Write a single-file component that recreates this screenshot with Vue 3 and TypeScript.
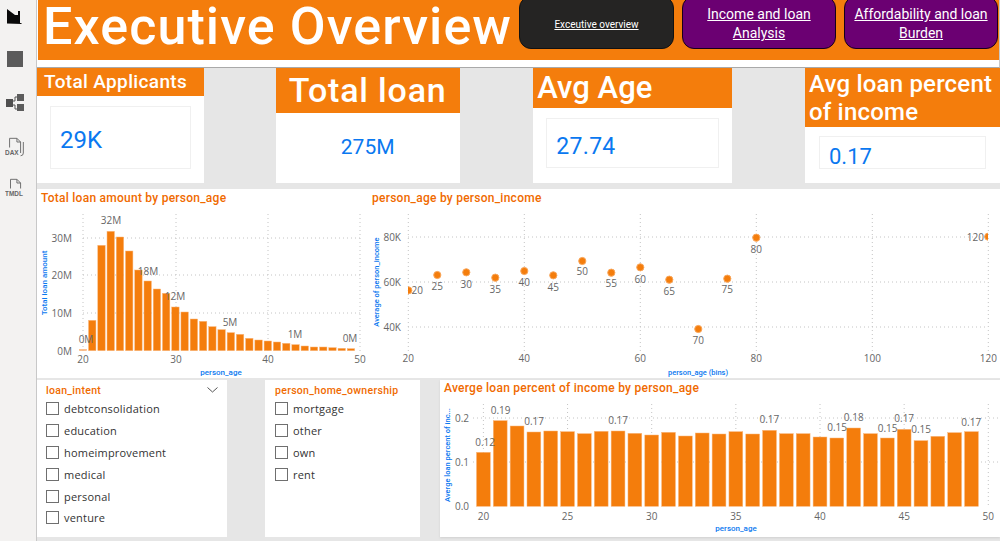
<script setup lang="ts">
const f1 = [493,406,181,139,156,198,255,288,312,325,366,381,402,409,425,434,443,448,460,465,468,471,475,479,483,486,486,488,490,491]
const bars1 = f1.map((z, i) => ({ x: 83 + i * 9.24 - 3.7, y: 185 + z / 3, h: (497 - z) / 3 }))
const grid1V = [83, 176, 268, 360]
const ticks1Y = [{ t: '0M', y: 351 }, { t: '10M', y: 313 }, { t: '20M', y: 275 }, { t: '30M', y: 238 }]
const labels1 = [
  { t: '0M', x: 86, y: 343 }, { t: '32M', x: 111, y: 224 }, { t: '18M', x: 148, y: 275 },
  { t: '12M', x: 175, y: 300 }, { t: '5M', x: 230, y: 326 }, { t: '1M', x: 295, y: 338 }, { t: '0M', x: 350, y: 342 }
]
const px2 = (a: number) => 408.3 + (a - 20) * 5.8
const pts2 = [
  [20,316,290],[25,270,286],[30,262,284],[35,278,289],[40,258,282],[45,271,287],[50,228,271],
  [55,263,283],[60,247,279],[65,284,291],[70,432,340],[75,281,289],[80,158,249],[120,155,237]
].map(([a, z, ly]) => ({
  a, x: px2(a), y: 185 + z / 3, ly: ly + 4,
  lx: a === 20 ? px2(a) + 9 : a === 120 ? px2(a) - 13 : px2(a)
}))
const ticks2X = [20, 40, 60, 80, 100, 120]
const f3 = [232,137,153,171,168,170,176,169,168,175,180,172,183,174,177,170,177,166,176,176,186,189,159,176,189,163,197,184,173,170]
const bars3 = f3.map((z, i) => ({ x: 483.4 + i * 16.83 - 6.9, y: 375 + z / 3, h: (394 - z) / 3 }))
const labels3 = [
  ['0.12',139,200],['0.19',182,105],['0.17',275,138],['0.17',508,136],['0.17',928,133],['0.15',1116,157],
  ['0.18',1162,127],['0.15',1256,160],['0.17',1302,130],['0.15',1349,163],['0.17',1488,140]
].map(([t, x, y]) => ({ t: t as string, x: 435 + (x as number) / 2.775, y: 375 + (y as number) / 3 + 4 }))
const ticks3X = [20, 25, 30, 35, 40, 45, 50]
const intents = ['debtconsolidation', 'education', 'homeimprovement', 'medical', 'personal', 'venture']
const homes = ['mortgage', 'other', 'own', 'rent']
const kpis = [
  { cls: 'k1', title: 'Total Applicants', value: '29K' },
  { cls: 'k2', title: 'Total loan', value: '275M' },
  { cls: 'k3', title: 'Avg Age', value: '27.74' },
  { cls: 'k4', title: 'Avg loan percent of income', value: '0.17' }
]
</script>

<template>
  <div class="app">
    <aside class="rail">
      <svg class="ic i1" viewBox="0 0 15 15"><path d="M0 0 L8 6 L11 6 L11 2 L13 2 L13 14 L14.5 14 L14.5 15 L0 14.5 Z" fill="#0a0a0a" /></svg>
      <svg class="ic i2" viewBox="0 0 16 16"><rect width="16" height="16" fill="#5b5b5b" /></svg>
      <svg class="ic i3" viewBox="0 0 20 20"><rect x="1" y="6" width="7" height="8" fill="#4f4f4f" /><rect x="12" y="1" width="7" height="7" fill="#5c5c5c" /><rect x="12" y="11" width="7" height="7" fill="#5c5c5c" /><path d="M8 8h2V4h2M8 12h2v4h2" fill="none" stroke="#555" /></svg>
      <svg class="ic i4" viewBox="0 0 24 22">
        <path d="M5 11V1h8l4 4v12" fill="none" stroke="#666" /><path d="M13 1v4h4M20 5v12q0 3-3 3" fill="none" stroke="#666" />
        <text x="0" y="19" class="ict">DAX</text>
      </svg>
      <svg class="ic i5" viewBox="0 0 24 22">
        <path d="M6 11V1h7l4 4v6" fill="none" stroke="#666" /><path d="M13 1v4h4" fill="none" stroke="#666" />
        <text x="0" y="19" class="ict">TMDL</text>
      </svg>
    </aside>

    <main class="page">
      <header class="head">
        <div class="band">
          <h1 class="title">Executive Overview</h1>
          <nav class="nav">
            <a class="btn dark">Exceutive overview</a>
            <a class="btn">Income and loan Analysis</a>
            <a class="btn">Affordability and loan Burden</a>
          </nav>
        </div>
      </header>

      <section class="kpis">
        <div v-for="k in kpis" :key="k.cls" class="kpi" :class="k.cls">
          <div class="kpi-head">{{ k.title }}</div>
          <div class="kpi-body"><div class="kpi-inner">{{ k.value }}</div></div>
        </div>
      </section>

      <section class="charts">
        <div class="panel p1">
          <div class="ctitle">Total loan amount by person_age</div>
          <svg class="plot" width="331" height="189" viewBox="37 189 331 189">
            <line v-for="x in grid1V" :key="x" :x1="x" :x2="x" y1="214" y2="351" class="grid" />
            <line v-for="t in ticks1Y.slice(1)" :key="t.t" x1="83" x2="362" :y1="t.y" :y2="t.y" class="grid" />
            <rect v-for="(b, i) in bars1" :key="i" :x="b.x" :y="b.y" width="7.4" :height="b.h" :class="i === 0 ? 'bar faint' : 'bar'" />
            <text v-for="t in ticks1Y" :key="'y' + t.t" x="72" :y="t.y + 4" class="tick end">{{ t.t }}</text>
            <text v-for="(x, i) in grid1V" :key="'x' + x" :x="x" y="363" class="tick mid">{{ 20 + i * 10 }}</text>
            <text v-for="(l, i) in labels1" :key="'l' + i" :x="l.x" :y="l.y" class="tick mid">{{ l.t }}</text>
            <text x="221" y="375" class="axis mid">person_age</text>
            <text transform="translate(47 283) rotate(-90)" class="axis mid">Total loan amount</text>
          </svg>
        </div>
        <div class="panel p2">
          <div class="ctitle">person_age by person_income</div>
          <svg class="plot" width="632" height="189" viewBox="368 189 632 189">
            <defs><clipPath id="plot2"><rect x="408" y="200" width="580" height="160" /></clipPath></defs>
            <line v-for="a in ticks2X" :key="a" :x1="px2(a)" :x2="px2(a)" y1="214" y2="353" class="grid" />
            <line v-for="y in [237, 282, 327]" :key="y" x1="408" x2="988" :y1="y" :y2="y" class="grid" />
            <text v-for="(t, i) in ['80K', '60K', '40K']" :key="t" x="401" :y="241 + i * 45" class="tick end">{{ t }}</text>
            <text v-for="a in ticks2X" :key="'t' + a" :x="px2(a)" y="362" class="tick mid">{{ a }}</text>
            <g clip-path="url(#plot2)">
              <circle v-for="p in pts2" :key="p.a" :cx="p.x" :cy="p.y" r="3.6" class="dot" />
            </g>
            <text v-for="p in pts2" :key="'l' + p.a" :x="p.lx" :y="p.ly" class="tick mid sm">{{ p.a }}</text>
            <text x="698" y="375" class="axis mid sx">person_age (bins)</text>
            <text transform="translate(379 282) rotate(-90)" class="axis mid sx">Average of person_income</text>
          </svg>
        </div>
      </section>

      <section class="bottom">
        <div class="slicer s1">
          <div class="stitle">loan_intent
            <svg class="chev" width="11" height="6" viewBox="0 0 11 6"><path d="M.5.5 5.5 5 10.5.5" fill="none" stroke="#555" /></svg>
          </div>
          <label v-for="o in intents" :key="o" class="opt"><span class="box"></span>{{ o }}</label>
        </div>
        <div class="slicer s2">
          <div class="stitle">person_home_ownership</div>
          <label v-for="o in homes" :key="o" class="opt"><span class="box"></span>{{ o }}</label>
        </div>
        <div class="panel p3">
          <div class="ctitle big">Averge loan percent of income by person_age</div>
          <svg class="plot" width="560" height="157" viewBox="440 380 560 157">
            <line v-for="a in ticks3X" :key="a" :x1="483.4 + (a - 20) * 16.83" :x2="483.4 + (a - 20) * 16.83" y1="404" y2="506" class="grid" />
            <line v-for="y in [418, 462]" :key="y" x1="473" x2="998" :y1="y" :y2="y" class="grid" />
            <rect v-for="(b, i) in bars3" :key="i" :x="b.x" :y="b.y" width="13.8" :height="b.h" class="bar" />
            <text v-for="(t, i) in ['0.2', '0.1', '0.0']" :key="t" x="469" :y="422 + i * 44" class="tick end">{{ t }}</text>
            <text v-for="a in ticks3X" :key="'t' + a" :x="483.4 + (a - 20) * 16.83" y="520" class="tick mid">{{ a }}</text>
            <text v-for="(l, i) in labels3" :key="i" :x="l.x" :y="l.y" class="tick mid sm">{{ l.t }}</text>
            <text x="736" y="531" class="axis mid">person_age</text>
            <text transform="translate(450 455) rotate(-90)" class="axis mid sx">Averge loan percent of inc...</text>
          </svg>
        </div>
      </section>
    </main>
  </div>
</template>

<style>
html, body { margin: 0; background: #e6e6e6; }
</style>

<style scoped>
.app {
  display: flex;
  width: 1000px;
  height: 541px;
  overflow: hidden;
  font-family: Roboto, "Liberation Sans", sans-serif;
  background: #e6e6e6;
}
.rail {
  box-sizing: border-box;
  width: 37px;
  flex: none;
  background: #f3f2f1;
  border-right: 1px solid #c8c8c8;
  display: flex;
  flex-direction: column;
  align-items: center;
  padding: 9px 7px 0 0;
}
.ic { display: block; }
.i1 { width: 15px; height: 15px; }
.i2 { width: 16px; height: 16px; margin-top: 27px; }
.i3 { width: 20px; height: 20px; margin-top: 26px; }
.i4 { width: 22px; height: 21px; margin-top: 24px; margin-left: 2px; }
.i5 { width: 22px; height: 21px; margin-top: 20px; margin-left: 2px; }
.ict { font: 700 7px "Liberation Sans", sans-serif; fill: #666; }
.page { flex: 1; min-width: 0; display: flex; flex-direction: column; }

.head {
  height: 68px;
  flex: none;
  box-sizing: border-box;
  background: #fff;
  padding: 0 0 6px 1px;
  border-bottom: 1px solid #a9a9a9;
  border-right: 1px solid #c8c8c8;
}
.band {
  height: 60px;
  background: #f47d0c;
  display: flex;
  align-items: flex-start;
}
.title {
  margin: 0 0 0 5px;
  width: 475px;
  flex: none;
  font-size: 52px;
  line-height: 54px;
  font-weight: 500;
  letter-spacing: 1.1px;
  color: #fff;
  white-space: nowrap;
}
.nav { display: flex; gap: 8px; margin-left: 1px; margin-top: -4px; }
.btn {
  box-sizing: border-box;
  width: 154px;
  height: 53px;
  padding: 3px 8px 0;
  display: flex;
  align-items: center;
  justify-content: center;
  text-align: center;
  background: #6b0072;
  border: 1px solid #16001a;
  border-radius: 12px;
  color: #fff;
  font-size: 14px;
  line-height: 19px;
  text-decoration: underline;
}
.btn.dark { width: 155px; background: #252423; font-size: 10px; border-color: #111; }

.kpis {
  height: 114px;
  flex: none;
  display: grid;
  grid-template-columns: 167px 184px 199px 195px;
  justify-content: space-between;
  box-sizing: border-box;
}
.kpi { background: #fff; display: flex; flex-direction: column; min-width: 0; }
.kpi-head {
  background: #f47d0c;
  color: #fff;
  font-weight: 500;
  box-sizing: border-box;
  white-space: nowrap;
}
.kpi-body { flex: 1; display: flex; }
.kpi-inner {
  color: #0a78f0;
  font-weight: 400;
  box-sizing: border-box;
  border: 1px solid #f0f0f0;
  display: flex;
  align-items: center;
}
.k1 .kpi-head { height: 28px; line-height: 28px; font-size: 19px; padding-left: 7px; letter-spacing: .35px; }
.k1 .kpi-inner { margin: 10px 13px 14px; width: 141px; height: 63px; padding: 5px 0 0 9px; font-size: 24px; }
.k2 { margin-left: -1px; margin-right: 1px; }
.k2 .kpi-head { height: 45px; line-height: 45px; font-size: 34px; text-align: center; letter-spacing: .8px; }
.k2 .kpi-inner { flex: 1; border: 0; justify-content: center; font-size: 21px; padding-bottom: 2px; }
.k3 .kpi-head { height: 40px; line-height: 40px; font-size: 31px; padding-left: 4px; letter-spacing: 0; }
.k3 .kpi-inner { margin: 10px 13px 14px; width: 173px; height: 50px; padding: 6px 0 0 9px; font-size: 23px; letter-spacing: .3px; }
.k4 .kpi-head { height: 59px; font-size: 24px; line-height: 28px; padding: 2px 0 0 4px; white-space: normal; letter-spacing: .2px; }
.k4 .kpi-inner { margin: 9px 14px 14px; width: 168px; height: 33px; padding: 7px 0 0 9px; font-size: 22px; }

.charts {
  margin-top: 7px;
  flex: none;
  display: flex;
  height: 189px;
  background: #fff;
}
.panel { position: relative; background: #fff; }
.p1 { width: 331px; }
.p2 { width: 632px; }
.plot { display: block; }
.ctitle {
  position: absolute;
  left: 4px;
  top: 2px;
  color: #f06a00;
  font-size: 12px;
  line-height: 14px;
  font-weight: 500;
  letter-spacing: .25px;
  white-space: nowrap;
}
.ctitle.big { top: 1px; }
.grid { stroke: #c4c4c4; stroke-width: 1; stroke-dasharray: 1 3; }
.bar { fill: #f47d0c; stroke: #f9b67a; stroke-width: .5; }
.bar.faint { fill: #fbb27a; }
.dot { fill: #f47d0c; stroke: #f9a65a; stroke-width: 1; }
.tick { font-family: "Open Sans", sans-serif; font-size: 10px; fill: #666; }
.tick.sm { font-size: 10px; }
.mid { text-anchor: middle; }
.end { text-anchor: end; }
.axis { font-size: 8px; fill: #0a78f0; font-weight: 500; }
.axis.sx { font-size: 7.5px; }

.bottom {
  margin-top: 2px;
  flex: none;
  height: 157px;
  display: flex;
}
.slicer { background: #fff; box-sizing: border-box; padding: 4px 0 0 9px; }
.s1 { width: 190px; }
.s2 { width: 155px; margin-left: 38px; padding-left: 10px; }
.p3 { width: 560px; margin-left: 20px; box-shadow: 0 1px 2px #d0d0d0; }
.stitle {
  position: relative;
  color: #f06a00;
  font-size: 10.5px;
  line-height: 14px;
  font-weight: 500;
  letter-spacing: .3px;
}
.chev { position: absolute; right: 9px; top: 3px; }
.opt {
  display: flex;
  align-items: center;
  height: 21.8px;
  color: #333;
  font-family: "Open Sans", sans-serif;
  font-size: 11px;
  letter-spacing: .2px;
}
.box {
  box-sizing: border-box;
  width: 13px;
  height: 13px;
  border: 1px solid #6f6f6f;
  margin-right: 5px;
  flex: none;
}
</style>
